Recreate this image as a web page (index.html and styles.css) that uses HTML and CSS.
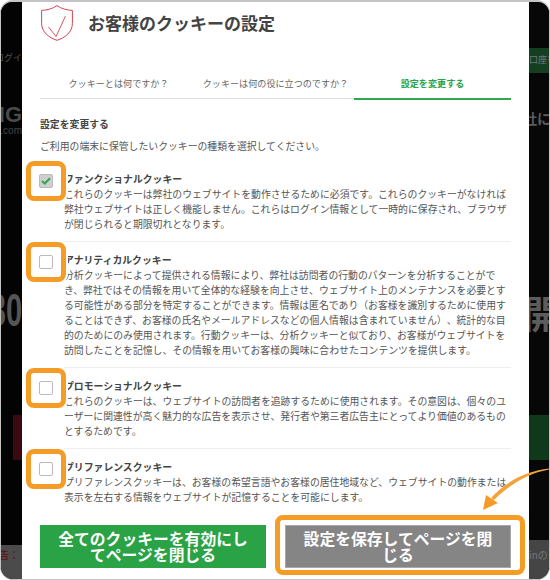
FILE: index.html
```html
<!DOCTYPE html>
<html lang="ja">
<head>
<meta charset="utf-8">
<title>お客様のクッキーの設定</title>
<link rel="stylesheet" href="styles.css">
</head>
<body>
<div class="stage">
  <aside class="strip strip-left" aria-hidden="true">
    <span class="bg-login">新ログイ</span>
    <span class="bg-logo">NG</span>
    <span class="bg-domain">ng.com</span>
    <span class="bg-big">30</span>
    <span class="bg-red"></span>
    <span class="bg-warn">告：</span>
  </aside>
  <main class="modal">
    <header class="head">
      <svg class="shield" viewBox="0 0 32 36" width="32" height="36" fill="none">
        <path d="M16 .6C12 3.600 6 5.200 .6 5.400V18.500C.6 27 8 32.800 16 35.300 24 32.800 31.400 27 31.400 18.500V5.400C26 5.200 20 3.600 16 .6Z" stroke="#d8434e" stroke-width="1"/>
        <path d="M7.500 22 15 31.500 24.500 11" stroke="#d8434e" stroke-width=".9"/>
      </svg>
      <h1 class="title">お客様のクッキーの設定</h1>
    </header>
    <nav class="tabs">
      <a class="tab">クッキーとは何ですか？</a>
      <a class="tab">クッキーは何の役に立つのですか？</a>
      <a class="tab tab-active">設定を変更する</a>
    </nav>
    <h2 class="section">設定を変更する</h2>
    <p class="lead">ご利用の端末に保管したいクッキーの種類を選択してください。</p>
    <section class="item">
      <span class="highlight"></span>
      <span class="check check-on"><svg viewBox="0 0 10 8" width="10" height="8"><path d="M1 4 3.800 6.500 9 1.200" fill="none" stroke="#2fa84f" stroke-width="2"/></svg></span>
      <div class="copy">
        <h3 class="name">ファンクショナルクッキー</h3>
        <p class="desc">これらのクッキーは弊社のウェブサイトを動作させるために必須です。これらのクッキーがなければ弊社ウェブサイトは正しく機能しません。これらはログイン情報として一時的に保存され、ブラウザが閉じられると期限切れとなります。</p>
      </div>
    </section>
    <section class="item">
      <span class="highlight"></span>
      <span class="check"></span>
      <div class="copy">
        <h3 class="name">アナリティカルクッキー</h3>
        <p class="desc">分析クッキーによって提供される情報により、弊社は訪問者の行動のパターンを分析することができ、弊社ではその情報を用いて全体的な経験を向上させ、ウェブサイト上のメンテナンスを必要とする可能性がある部分を特定することができます。情報は匿名であり（お客様を識別するために使用することはできず、お客様の氏名やメールアドレスなどの個人情報は含まれていません）、統計的な目的のためにのみ使用されます。行動クッキーは、分析クッキーと似ており、お客様がウェブサイトを訪問したことを記憶し、その情報を用いてお客様の興味に合わせたコンテンツを提供します。</p>
      </div>
    </section>
    <section class="item">
      <span class="highlight"></span>
      <span class="check"></span>
      <div class="copy">
        <h3 class="name">プロモーショナルクッキー</h3>
        <p class="desc">これらのクッキーは、ウェブサイトの訪問者を追跡するために使用されます。その意図は、個々のユーザーに関連性が高く魅力的な広告を表示させ、発行者や第三者広告主にとってより価値のあるものとするためです。</p>
      </div>
    </section>
    <section class="item item-last">
      <span class="highlight"></span>
      <span class="check"></span>
      <div class="copy">
        <h3 class="name">プリファレンスクッキー</h3>
        <p class="desc">プリファレンスクッキーは、お客様の希望言語やお客様の居住地域など、ウェブサイトの動作または表示を左右する情報をウェブサイトが記憶することを可能にします。</p>
      </div>
    </section>
    <div class="actions">
      <button class="btn btn-green">全てのクッキーを有効にしてページを閉じる</button>
      <button class="btn btn-gray">設定を保存してページを閉じる</button>
    </div>
  </main>
  <aside class="strip strip-right" aria-hidden="true">
    <span class="bg-account">口座を</span>
    <span class="bg-co">社に</span>
    <span class="bg-kai">開</span>
    <span class="bg-green"></span>
    <span class="bg-in">inの</span>
  </aside>
  <svg class="arrow" viewBox="0 0 70 45" width="70" height="45" fill="none">
    <path d="M69 1.500C48 4 27 13 11 31L14 33C31 16 50 6 69 2.500Z" fill="#f3a33c"/>
    <path d="M3 43 6 28 18 36Z" fill="#f59c27"/>
  </svg>
  <span class="save-ring"></span>
</div>
</body>
</html>
```
FILE: styles.css
```css
* { box-sizing: border-box; }
html, body { margin: 0; padding: 0; background: #fff; }
body { width: 550px; height: 580px; overflow: hidden; font-family: "Noto Sans CJK JP", "Noto Sans", sans-serif; color: #555; text-spacing-trim: space-all; }
h1, h2, h3, p { margin: 0; }

.stage {
  position: relative;
  display: flex;
  width: 550px;
  height: 580px;
  background: #050505;
  border: 1px solid #c4c4c4;
  border-top-width: 2px;
  border-radius: 13px;
  overflow: hidden;
}

.strip { display: flex; flex-direction: column; flex: none; overflow: hidden; white-space: nowrap; }
.strip-left { width: 21px; align-items: flex-end; background: linear-gradient(#030303 543px, #4b4b4b 543px); }
.strip-right { width: 20px; align-items: flex-start; background: linear-gradient(#070707 538px, #454545 538px); }
.strip span { display: block; flex: none; }

.bg-login { margin-top: 50px; font-size: 9px; line-height: 12px; color: #555; }
.bg-logo { margin-top: 41px; font-size: 22px; font-weight: 700; line-height: 19px; font-family: "Liberation Sans", sans-serif; color: #4a4a4a; }
.bg-domain { margin-top: 2px; font-size: 10px; line-height: 10px; color: #444; font-family: "Liberation Sans", sans-serif; }
.bg-big { margin-top: 152px; font-size: 47px; line-height: 44px; font-weight: 700; font-family: "Liberation Sans", sans-serif; color: #555; transform: scaleX(.62); transform-origin: right center; }
.bg-red { margin-top: 83px; width: 9px; height: 45px; background: #3a0a10; }
.bg-warn { margin-top: 88px; margin-right: 3px; font-size: 10px; line-height: 14px; font-weight: 700; color: #5b1a1e; }

.bg-account { margin-top: 46px; width: 100%; height: 25px; padding-top: 6px; font-size: 9px; line-height: 12px; background: #143f20; color: #777; }
.bg-co { margin-top: 35px; margin-left: -6px; font-size: 14px; line-height: 20px; font-weight: 700; color: #5c5c5c; }
.bg-kai { margin-top: 162px; margin-left: -6px; font-size: 38px; line-height: 44px; font-weight: 700; color: #5c5c5c; }
.bg-green { margin-top: 81px; width: 100%; height: 45px; background: #10391c; }
.bg-in { margin-top: 88px; font-size: 10px; line-height: 14px; color: #777; }

.modal { width: 507px; flex: none; padding: 3px 18px 0; background: #fff; }
.head { display: flex; align-items: center; height: 36px; gap: 15px; }
.shield { flex: none; margin-left: 1px; }
.title { font-size: 17px; line-height: 24px; font-weight: 700; color: #444; }

.tabs { display: flex; margin-top: 29px; height: 29px; border-bottom: 1px solid #ddd; }
.tab { flex: 1; text-align: center; font-size: 9.100px; line-height: 14px; padding-top: 6px; color: #666; white-space: nowrap; }
.tab-active { color: #2aa246; font-weight: 700; border-bottom: 2px solid #2fa84f; height: 30px; }

.section { margin-top: 18px; font-size: 9.850px; line-height: 14px; font-weight: 700; color: #444; }
.lead { margin-top: 8px; margin-bottom: 8px; font-size: 9.850px; line-height: 14px; color: #555; }

.item { position: relative; margin-left: 24px; padding: 11px 0 9px; border-bottom: 1px solid #eee; }
.item-last { border-bottom: none; padding-bottom: 0; }
.highlight { position: absolute; left: -38px; top: 0; width: 40px; height: 40px; border: 5px solid #f59c27; border-radius: 8px; box-shadow: 0 0 0 2px #fff; z-index: 2; }
.check { position: absolute; left: -25px; top: 13px; display: flex; align-items: center; justify-content: center; width: 14px; height: 14px; border: 1px solid #bbb; border-radius: 2px; background: #fff; z-index: 3; }
.check-on { background: #cfcfcf; }
.name { font-size: 9.850px; line-height: 15px; font-weight: 700; color: #444; }
.desc { font-size: 9.850px; line-height: 15px; color: #555; line-break: loose; }

.actions { display: flex; justify-content: space-between; margin-top: 20px; }
.btn { width: 226px; height: 43px; padding: 0 16px; border: 1px solid transparent; font-family: inherit; font-size: 15.800px; line-height: 16px; font-weight: 700; color: #fff; text-align: center; }
.btn-green { background: #2aa246; }
.btn-gray { background: #858585; border-color: #a8a8a8; }

.arrow { position: absolute; left: 479px; top: 465px; z-index: 3; }
.save-ring { position: absolute; left: 274px; top: 513px; width: 250px; height: 60px; border: 5px solid #f59c27; border-radius: 8px; z-index: 3; }
```
